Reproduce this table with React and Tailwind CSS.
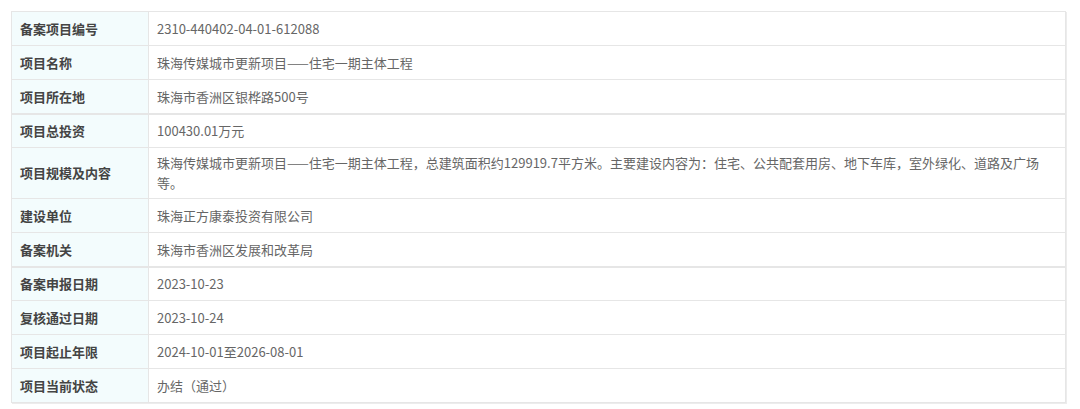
import React from "react";

const groups = [
  [
    ["备案项目编号", "2310-440402-04-01-612088"],
    ["项目名称", "珠海传媒城市更新项目——住宅一期主体工程"],
    ["项目所在地", "珠海市香洲区银桦路500号"],
  ],
  [
    ["项目总投资", "100430.01万元"],
    [
      "项目规模及内容",
      "珠海传媒城市更新项目——住宅一期主体工程，总建筑面积约129919.7平方米。主要建设内容为：住宅、公共配套用房、地下车库，室外绿化、道路及广场等。",
    ],
    ["建设单位", "珠海正方康泰投资有限公司"],
    ["备案机关", "珠海市香洲区发展和改革局"],
  ],
  [
    ["备案申报日期", "2023-10-23"],
    ["复核通过日期", "2023-10-24"],
    ["项目起止年限", "2024-10-01至2026-08-01"],
    ["项目当前状态", "办结（通过）"],
  ],
];

function App() {
  return (
    <div
      className="bg-white w-[1080px] h-[409px] pt-[11px] pl-[11px]"
      style={{ fontFamily: '"Noto Sans CJK SC", "Noto Sans", sans-serif' }}
    >
      <div className="w-[1055px] shadow-[1px_1px_0_#ececec]">
        {groups.map((rows, gi) => (
          <table
            key={gi}
            className="w-full border-collapse border border-[#e6e6e6] text-[13px] leading-[20px] table-fixed"
          >
            <tbody>
              {rows.map(([label, value], ri) => {
                let h = "h-[34px]";
                if (value.length > 80) h = "h-[52px]";
                else if (gi > 0 && ri === 0) h = "h-[33px]";
                return (
                  <tr key={label}>
                    <td
                      className={`w-[137px] border border-[#e6e6e6] bg-[#f3fcfd] pl-[8px] font-bold text-[#444] ${h}`}
                    >
                      {label}
                    </td>
                    <td className="border border-[#e6e6e6] pl-[8px] pr-[20px] py-[5px] text-[#666]">
                      {value}
                    </td>
                  </tr>
                );
              })}
            </tbody>
          </table>
        ))}
      </div>
    </div>
  );
}

export default App;
